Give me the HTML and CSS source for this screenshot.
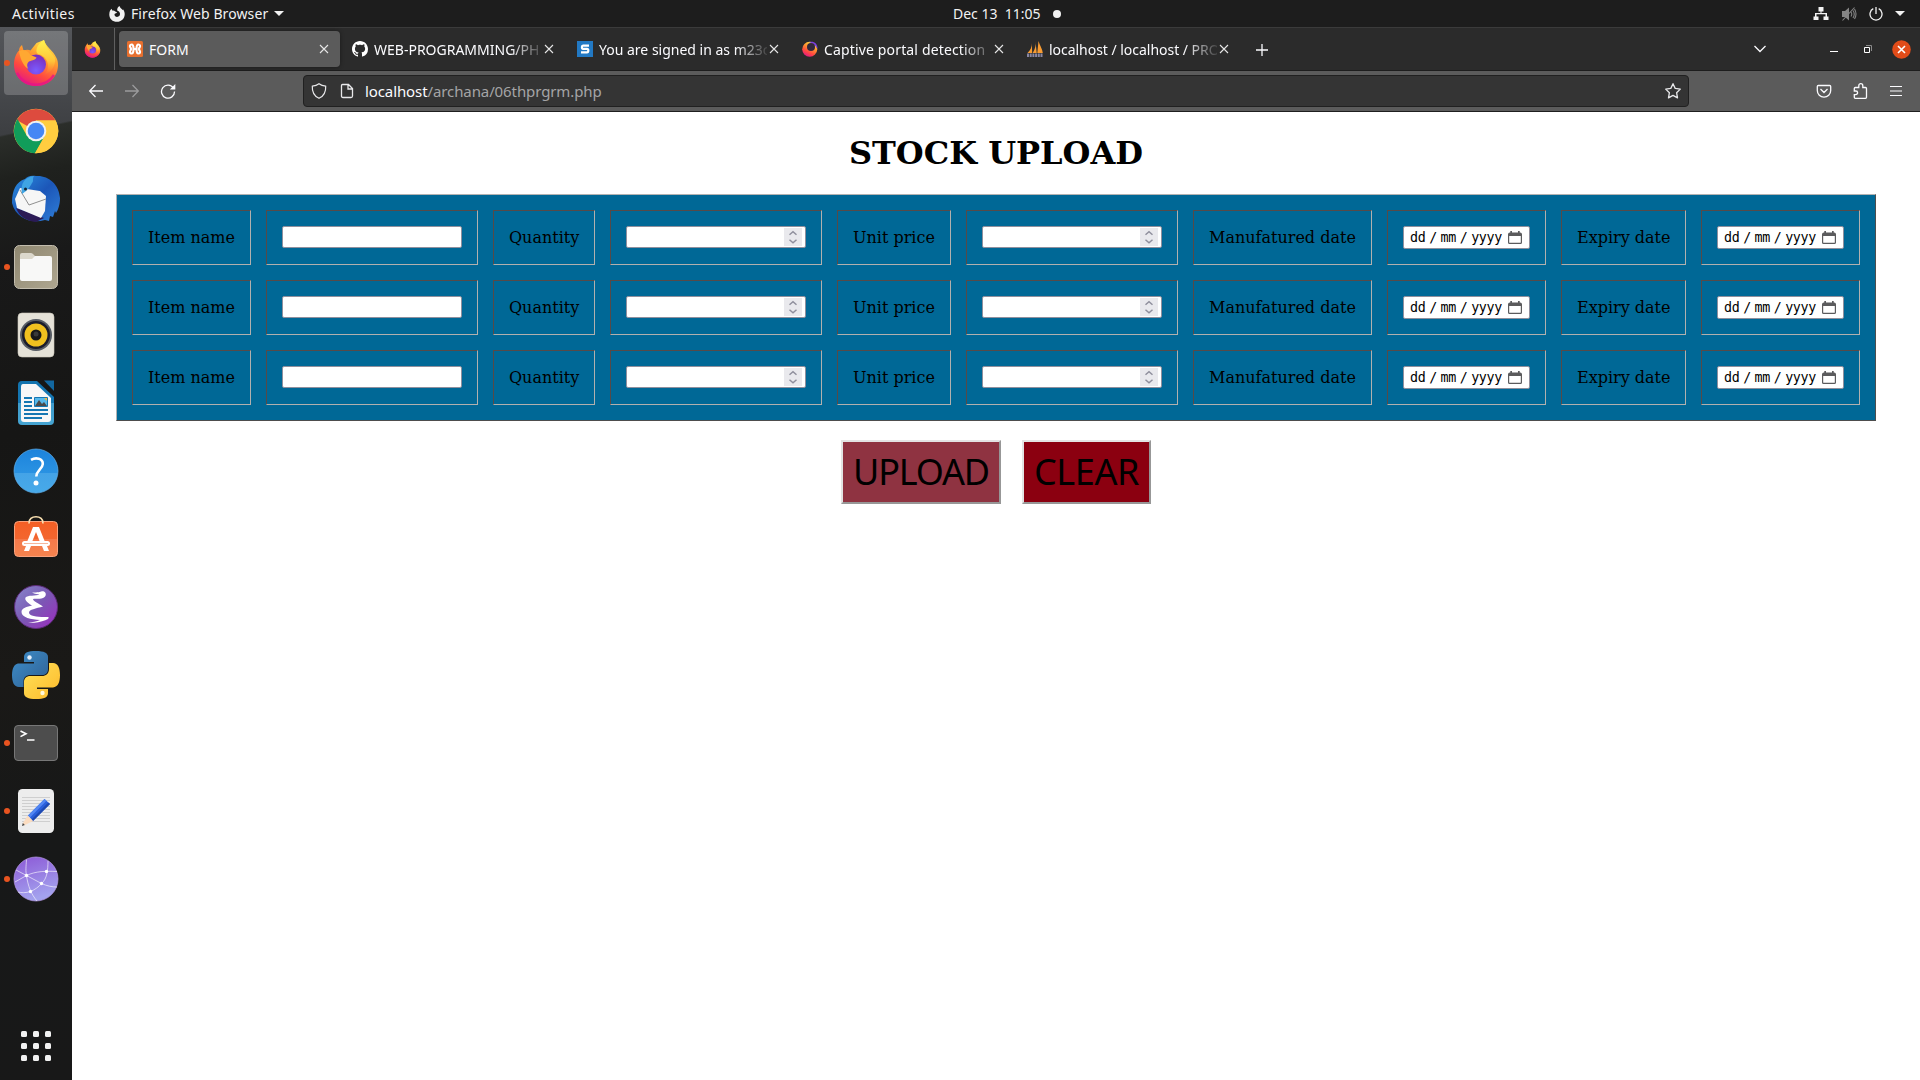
FILE: index.html
```html
<!DOCTYPE html>
<html lang="en">
<head>
<meta charset="utf-8">
<title>FORM</title>
<link rel="stylesheet" href="styles.css">
</head>
<body>
<svg class="defs" width="0" height="0">
  <defs>
    <linearGradient id="gFox" x1="0.8" y1="0" x2="0.3" y2="1"><stop offset="0" stop-color="#fff44f"/><stop offset=".35" stop-color="#ffa02e"/><stop offset=".7" stop-color="#ff4a3f"/><stop offset="1" stop-color="#e31587"/></linearGradient>
    <linearGradient id="gFlame" x1="0.6" y1="0" x2="0.6" y2="1"><stop offset="0" stop-color="#fff44f"/><stop offset=".6" stop-color="#ffc53a"/><stop offset="1" stop-color="#ff8a2a" stop-opacity="0"/></linearGradient>
    <radialGradient id="gGlobe" cx=".5" cy=".8" r=".8"><stop offset="0" stop-color="#7a5cff"/><stop offset="1" stop-color="#7a2bb8"/></radialGradient>
    <linearGradient id="gBird" x1="0" y1="0" x2="1" y2="1"><stop offset="0" stop-color="#2a8fe0"/><stop offset=".5" stop-color="#1c56b8"/><stop offset="1" stop-color="#2f7fd8"/></linearGradient>
    <linearGradient id="gFiles" x1="0" y1="0" x2="1" y2="1"><stop offset="0" stop-color="#8f8770"/><stop offset="1" stop-color="#aea690"/></linearGradient>
    <linearGradient id="gHelp" x1="0" y1="0" x2="0" y2="1"><stop offset="0" stop-color="#1c83dc"/><stop offset=".54" stop-color="#2a92e2"/><stop offset=".55" stop-color="#44a3e7"/><stop offset="1" stop-color="#47aae9"/></linearGradient>
    <linearGradient id="gBag" x1="0" y1="0" x2="0" y2="1"><stop offset="0" stop-color="#f45f25"/><stop offset=".5" stop-color="#f3662f"/><stop offset=".51" stop-color="#f4794a"/><stop offset="1" stop-color="#f5844f"/></linearGradient>
    <linearGradient id="gEmacs" x1="0" y1="0" x2="1" y2="1"><stop offset="0" stop-color="#8788cc"/><stop offset=".5" stop-color="#7b58b4"/><stop offset="1" stop-color="#9d2ac0"/></linearGradient>
    <linearGradient id="gPyB" x1="0" y1="0" x2="1" y2="1"><stop offset="0" stop-color="#3e8fcb"/><stop offset="1" stop-color="#2f5f92"/></linearGradient>
    <linearGradient id="gPyY" x1="0" y1="0" x2="1" y2="1"><stop offset="0" stop-color="#ffe25a"/><stop offset="1" stop-color="#fdb92a"/></linearGradient>
    <linearGradient id="gWeb" x1="0" y1="0" x2="0.3" y2="1"><stop offset="0" stop-color="#8c58d6"/><stop offset="1" stop-color="#a3a2ee"/></linearGradient>
    <linearGradient id="gWriter" x1="0" y1="0" x2="0" y2="1"><stop offset="0" stop-color="#1273ae"/><stop offset=".5" stop-color="#1577b3"/><stop offset=".51" stop-color="#3f9ccb"/><stop offset="1" stop-color="#45a4d2"/></linearGradient>
    <symbol id="fox" viewBox="0 0 46 48">
      <path fill="url(#gFox)" d="M23 47C10 47 1 37.500 1 25.500C1 19 3.500 14 6 11.500C6 9.500 7 7.500 9 6L10.500 11.500C13 10.500 16 10.500 17.500 11.500C20 8 22 6 23.500 4L31 1C33 8 40 11 43.500 19C45.500 23 45.500 29 43.500 34C40 42 32.500 47 23 47Z"/>
      <circle cx="23" cy="25.500" r="10" fill="url(#gGlobe)"/>
      <path fill="#ffa832" d="M6 12C10 10 15 11 17.500 16L23.500 18.500C22.500 21.500 17.500 21.500 16 22.500C14 24 13.500 27 15.500 30C10 27 7 19 6 12Z"/>
      <path fill="url(#gFlame)" d="M31 1C23 6 22 13 25 15C30 16 35 20 35 27C35 31 33 34 31 36C38 34 43 27 42 19C38 13 33 9 31 1Z"/>
      <path fill="none" stroke="#e31587" stroke-width="2.500" stroke-opacity=".8" d="M4 34C8 42 15 45.700 23 45.700C30 45.700 37 42.500 41 36"/>
    </symbol>
    <symbol id="x" viewBox="0 0 12 12"><path d="M2 2l8 8M10 2l-8 8" fill="none" stroke="currentColor" stroke-width="1.100"/></symbol>
    <symbol id="cal" viewBox="0 0 14 14"><path fill="#5b5b5d" d="M2.300 0h1.700v1.500h6V0h1.700v1.500h.5A1.800 1.800 0 0 1 14 3.200V11.500a1.500 1.500 0 0 1-1.500 1.500h-11A1.500 1.500 0 0 1 0 11.500V3.200A1.800 1.800 0 0 1 1.800 1.500h.5zM1.200 5v6.200c0 .4.200.6.600.6h10.400c.4 0 .6-.2.600-.6V5z"/></symbol>
    <symbol id="spin" viewBox="0 0 18 18"><path d="M5.500 6.800L9 3.800l3.500 3M5.500 11.800L9 14.800l3.500-3" fill="none" stroke="#8f8f9d" stroke-width="1.500"/></symbol>
  </defs>
</svg>

<header class="topbar">
  <span class="activities t">Activities</span>
  <svg class="appicon" viewBox="0 0 16 16"><path fill="#f2f2f2" d="M8 15.800C3.600 15.800.3 12.600.3 8.400C.3 5.500 1.400 3.800 2.600 2.800L3.200 4.600C4.500 4.300 5.600 4.700 6.200 5.500L8 6.200C7.600 7.400 6.300 7.300 5.800 7.800C5 8.700 5.600 10.800 8 10.900C10 10.900 11.100 9.400 11 7.800C10.900 6 9.300 5 8.200 4.600C8 2.600 9 1 10.500.1C11 2.200 12.600 2.500 13.600 4L14.200 3.400C15.300 5 15.800 6.700 15.700 8.500C15.500 12.700 12.200 15.800 8 15.800Z"/></svg>
  <span class="appname t">Firefox Web Browser</span>
  <i class="tri"></i>
  <div class="clock"><span class="t">Dec 13&nbsp; 11:05</span><i class="note"></i></div>
  <div class="status">
    <svg width="16" height="14" viewBox="0 0 16 14"><path fill="#f2f2f2" d="M5.500 0h5v4.500h-2V6H14v3.500h1.500V13h-5V9.500h2V7.200h-9v2.300h2V13h-5V9.500H2V6h5.500V4.500h-2z"/></svg>
    <svg width="16" height="14" viewBox="0 0 16 14"><path fill="#858585" d="M1 4h3l4-3.500v13L4 10H1z"/><path d="M10 5q1.500 2 0 4.500M12 3.500q2.500 3.500 0 7.500M13.500 2q3 5 0 10M1.500 13.500L13.500.5" fill="none" stroke="#858585" stroke-width="1.100"/></svg>
    <svg width="14" height="14" viewBox="0 0 14 14"><path d="M4.300 1.700a6 6 0 1 0 5.400 0M7 0v7" fill="none" stroke="#f2f2f2" stroke-width="1.300"/></svg>
    <i class="tri"></i>
  </div>
</header>

<div class="desktop">
<nav class="dock">
  <div class="slot active run"><svg viewBox="0 0 48 48"><use href="#fox" x="1" y="0" width="46" height="48"/></svg></div>
  <div class="slot"><svg viewBox="0 0 48 48"><circle cx="24" cy="24" r="22.300" fill="#ffcd40"/><path fill="#dd4b3e" d="M24 24L4.700 13A22.300 22.300 0 0 1 43.500 13.500H24Z"/><path fill="#119d5a" d="M24 24L15 29L5.500 12A22.300 22.300 0 0 0 23 46.300L32 30Z"/><path fill="#ffcd40" d="M24 24V13.500H43.500A22.300 22.300 0 0 1 23 46.300L32.500 30Z"/><circle cx="24" cy="24" r="10.300" fill="#f1f1f1"/><circle cx="24" cy="24" r="8.300" fill="#4687f4"/></svg></div>
  <div class="slot"><svg viewBox="0 0 48 48"><path fill="url(#gBird)" d="M24 1C36 0 47 9 48 23C48 30 46 35 44 38L43 36L41 42L38 41L37 46L33 45C20 49 4 44 0 28C0 15 4 7 13 4C15 2 18 0 24 1Z"/><path fill="#2b1a55" d="M4 33L32 43L24 47C14 46 7 41 4 33Z"/><path fill="#f6f6f6" d="M8 13L28 16L34 21L33 36L29 43L5 33L3 24Z"/><path fill="none" stroke="#8f8f8f" d="M8 15L17 30L34 24"/><path fill="#3fa4e4" d="M10 19C8 8 13 2 22 1C20 4 22 6 20 8C18 12 16 15 10 19Z"/><circle cx="13.500" cy="14" r="1.500" fill="#123"/></svg></div>
  <div class="slot run"><svg viewBox="0 0 48 48"><rect x="2.500" y="2.500" width="43" height="43" rx="5" fill="url(#gFiles)" stroke="#c3bdae"/><path fill="#dcd8cc" d="M8 12q0-2 2-2h9q1.500 0 2.500 1.500L24 14v5H8z"/><path fill="#f8f8f7" d="M8 16h12l3-3h15q2 0 2 2v21q0 2-2 2H10q-2 0-2-2z"/></svg></div>
  <div class="slot"><svg viewBox="0 0 48 48"><rect x="6" y="2" width="36" height="44" rx="4" fill="#e5e2d8" stroke="#cfcbbd" stroke-width=".6"/><circle cx="24" cy="24" r="16" fill="#575c64"/><circle cx="24" cy="24" r="14" fill="#1b1c2b"/><circle cx="24" cy="24" r="11.500" fill="#f0c01f"/><circle cx="24" cy="24" r="5.500" fill="#191919"/><circle cx="24" cy="23" r="2.500" fill="#3a3a3a"/></svg></div>
  <div class="slot"><svg viewBox="0 0 48 48"><path fill="url(#gWriter)" d="M10 2h15l17 16v24q0 4-4 4H10q-4 0-4-4V6q0-4 4-4z"/><path fill="#f7f7f7" d="M11 5h13l15 14v21q0 3-3 3H12q-3 0-3-3V8q0-3 2-3z"/><path fill="#1267a0" d="M32 1.500h10V12z"/><path stroke="#1577b3" stroke-width="2" d="M12 19h8M12 23h8M12 27h8M12 31h24M12 35h24M12 39h18"/><path fill="#56b8ea" stroke="#1577b3" d="M22.500 18.500h13v9h-13z"/><path fill="#4a4a4a" d="M23 27l4-6 3 4 2-2 3 4z"/><path fill="#f0b840" d="M32 19h3v3z"/></svg></div>
  <div class="slot"><svg viewBox="0 0 48 48"><circle cx="24" cy="24" r="22" fill="url(#gHelp)" stroke="#5fb0ee" stroke-width=".7"/><path fill="none" stroke="#fff" stroke-width="2.600" d="M19 12.900C24 10 31 11.500 30.800 17C30.500 22 24.500 23 24.300 29.500"/><circle cx="24" cy="36" r="2.500" fill="#fff"/></svg></div>
  <div class="slot"><svg viewBox="0 0 48 48"><g transform="translate(0 -1)"><rect x="2.500" y="7.500" width="43" height="35" rx="4" fill="url(#gBag)" stroke="#f9a27c"/><path fill="none" stroke="#f8dfb0" stroke-width="1.700" d="M17 9.500C16 .5 32 .5 31 9.500"/><path fill="#fff" d="M21 13h6l6 15h-5l-4-10-4 10h-5zM14 32h5l-2 5h-5zM30 32h5l2 5h-5z"/><rect x="10" y="27" width="28" height="5" rx="2.500" fill="#fff"/><path stroke="#f4a582" stroke-width=".8" d="M12 29.500h24"/></g></svg></div>
  <div class="slot"><svg viewBox="0 0 48 48"><circle cx="24" cy="24" r="21.500" fill="url(#gEmacs)" stroke="#5c2a78"/><path fill="#fff" d="M20 9.500C28 10 29 7.500 32 8.500C35 10 34 14 31 15C27 16.500 21 15 21 16.500C22 18.500 26 20 31 23.500C24 25.500 17 26.500 17 29.500C17 33.500 28 34.500 36 34C37.500 34.500 36.500 36 34 37C28 39.500 22 40 16 39.800C20 39 25 38.500 28 37C19 36.500 9.500 34.500 9.500 29C9.500 25 15 23.500 20 22.500C15 19.500 12.500 17 13.500 14.500C15.500 12 24 13 27.500 11.500C26 11 22.500 11 20 9.500Z"/></svg></div>
  <div class="slot"><svg viewBox="0 0 48 48"><path fill="url(#gPyB)" d="M24 0C16 0 12 1.500 12 6V11H22V12.500H6C2 13 0 18 0 24C0 31 2 36 7 36H11.500V30C11.500 26 15 24 18 24H30C33.500 24 36 22 36 18V6C36 2 32 0 24 0Z"/><path fill="url(#gPyY)" d="M24 48C32 48 36 46.500 36 42V38H25V36.500H41C46 36 48 31 48 24C48 17 46 12 41 12H37V18C37 22.500 34 25 30 25H18C15 25 12 27 12 31V42C12 46 16 48 24 48Z"/><circle cx="17.500" cy="6.500" r="2.200" fill="#e6f0fa"/><circle cx="30.500" cy="42" r="2.200" fill="#fff8dc"/></svg></div>
  <div class="slot run"><svg viewBox="0 0 48 48"><rect x="2.500" y="6.500" width="43" height="35" rx="3.500" fill="#4d4d4d" stroke="#777"/><path fill="none" stroke="#fff" stroke-width="1.600" d="M8.500 12l5.500 2.800-5.500 2.800M15 21h7.500"/></svg></div>
  <div class="slot run"><svg viewBox="0 0 48 48"><rect x="6" y="2" width="36" height="44" rx="4.500" fill="#ededed"/><path stroke="#cfcfcf" d="M10 10.500h28M10 13.500h28M10 16.500h28M10 19.500h28M10 22.500h28M10 25.500h28M10 28.500h28M10 31.500h28M10 34.500h28"/><path fill="#2a5fdb" d="M16 28.500L32.500 12L38 17L21 34Z"/><path fill="#5286f2" d="M16 28.500L32.500 12L34.500 13.800L18 30.500Z"/><path fill="#1e49b0" d="M19.500 32.500L36.300 15.500L38 17L21 34Z"/><path fill="#fbdcc0" d="M15.500 28.500L21 34L12 38.500L10.500 37Z"/><path fill="#444" d="M10.800 36L12.800 38L10 39Z"/></svg></div>
  <div class="slot run"><svg viewBox="0 0 48 48"><circle cx="24" cy="24" r="22" fill="url(#gWeb)" stroke="#b79be8" stroke-width=".7"/><path fill="none" stroke="#fff" stroke-opacity=".6" stroke-width="1" d="M3 27L14.500 20.500C24 16 34 16 45 16.500M4 15L14.500 20.500L29.500 28.500C35 31 40 32 45 32M14.500 4.500C14 12 13.500 16 14.500 20.500C16 31 19 39 25 46M36 6C36 15 35 24 29.500 28.500C27 32 22 35 18.500 36.500C14 38 9 38 6 37"/><g fill="#fff"><circle cx="14.500" cy="20.500" r="1.700"/><circle cx="34.500" cy="16.500" r="1.700"/><circle cx="29.500" cy="28.500" r="1.700"/><circle cx="18.500" cy="36.500" r="1.700"/></g></svg></div>
  <div class="apps"><i></i><i></i><i></i><i></i><i></i><i></i><i></i><i></i><i></i></div>
</nav>

<main class="browser">
  <div class="tabs">
    <div class="pinned"><svg width="17" height="17"><use href="#fox"/></svg></div>
    <div class="tab current">
      <svg width="16" height="16" viewBox="0 0 16 16"><rect width="16" height="16" rx="1.500" fill="#e8702f"/><path fill="none" stroke="#fff" stroke-width="2.200" stroke-linejoin="round" d="M6.500 8C6.500 6.500 6.500 3.500 4.600 3.500C3 3.500 2.600 5 3.300 6.300Q4 7 4 8Q4 9 3.300 9.700C2.600 11 3 12.500 4.600 12.500C6.500 12.500 6.500 9.500 6.500 8H9.500C9.500 9.500 9.500 12.500 11.400 12.500C13 12.500 13.400 11 12.700 9.700Q12 9 12 8Q12 7 12.700 6.300C13.400 5 13 3.500 11.400 3.500C9.500 3.500 9.500 6.500 9.500 8"/></svg>
      <span class="title t form">FORM</span><svg class="close" width="12" height="12"><use href="#x"/></svg></div>
    <div class="tab">
      <svg width="16" height="16" viewBox="0 0 16 16"><path fill="#fff" d="M8 0C3.580 0 0 3.580 0 8c0 3.540 2.290 6.530 5.470 7.590.4.070.55-.17.55-.38 0-.19-.01-.82-.01-1.490-2.010.37-2.530-.49-2.690-.94-.09-.23-.48-.94-.82-1.130-.28-.15-.68-.52-.01-.53.63-.01 1.080.58 1.230.82.720 1.210 1.870.87 2.330.66.070-.52.280-.87.510-1.070-1.780-.2-3.640-.89-3.640-3.950 0-.87.310-1.590.82-2.150-.08-.2-.36-1.020.08-2.120 0 0 .67-.21 2.200.82.640-.18 1.320-.27 2-.27s1.360.09 2 .27c1.530-1.040 2.200-.82 2.200-.82.440 1.100.16 1.920.08 2.120.51.56.82 1.270.82 2.150 0 3.070-1.870 3.750-3.650 3.950.29.25.54.73.54 1.480 0 1.070-.01 1.930-.01 2.200 0 .21.15.46.55.38A8.010 8.010 0 0 0 16 8c0-4.420-3.580-8-8-8z"/></svg>
      <span class="title fade t web">WEB-PROGRAMMING/PH</span><svg class="close" width="12" height="12"><use href="#x"/></svg></div>
    <div class="tab">
      <svg width="16" height="16" viewBox="0 0 16 16"><rect width="16" height="16" fill="#2279c4"/><path fill="none" stroke="#fff" stroke-width="2.200" d="M12 4.600H6Q4.900 4.600 4.900 6Q4.900 7.800 6 7.800H10Q11.300 7.800 11.300 9.500Q11.300 11.400 10 11.400H4"/></svg>
      <span class="title fade t signed">You are signed in as m23c</span><svg class="close" width="12" height="12"><use href="#x"/></svg></div>
    <div class="tab">
      <svg width="16" height="16" viewBox="0 0 16 16"><circle cx="7.700" cy="8.300" r="7.500" fill="url(#gFox)"/><path fill="#7b3fe0" d="M7 1C12-.5 16 3 15.500 8C14 5 12 3 7 1Z"/><circle cx="9" cy="6" r="4" fill="#33283c"/></svg>
      <span class="title fade t captive">Captive portal detection |</span><svg class="close" width="12" height="12"><use href="#x"/></svg></div>
    <div class="tab">
      <svg width="16" height="16" viewBox="0 0 16 16"><path fill="#f89c33" d="M4.800 2C5 6 3.500 9 .5 12H5.200ZM8.500 0C9.200 4 8.200 8 5.700 12H9.700ZM11.500 0C12.500 4 15.500 8 15.800 12H10.300Z"/><path stroke="#8886a2" stroke-width="3.500" stroke-dasharray="2 .7" d="M0 14.200h16"/></svg>
      <span class="title fade t pma">localhost / localhost / PRO</span><svg class="close" width="12" height="12"><use href="#x"/></svg></div>
    <svg class="plus" width="14" height="14" viewBox="0 0 14 14"><path d="M7 1v12M1 7h12" stroke="#fbfbfe" stroke-width="1.300"/></svg>
    <div class="winctl">
      <svg width="14" height="14" viewBox="0 0 14 14"><path d="M1.500 4l5.500 5.500L12.500 4" fill="none" stroke="#fbfbfe" stroke-width="1.300"/></svg>
      <svg class="min" width="8" height="14" viewBox="0 0 8 14"><path d="M0 9.500h8" stroke="#fff"/></svg>
      <svg class="res" width="8" height="14" viewBox="0 0 8 14"><path d="M.5 5.500h5v5h-5z" fill="none" stroke="#fff"/><path d="M2 3.500h5.500V9" fill="none" stroke="#8a8a8a"/></svg>
      <svg class="quit" width="19" height="19" viewBox="0 0 19 19"><circle cx="9.500" cy="9.500" r="9.300" fill="#e24c19"/><path d="M6 6l7 7M13 6l-7 7" stroke="#fff" stroke-width="1.600"/></svg>
    </div>
  </div>
  <div class="toolbar">
    <svg class="ic" viewBox="0 0 16 16"><path d="M7.500 2L1.700 8l5.800 6M1.700 8H15" fill="none" stroke="#fbfbfe" stroke-width="1.300"/></svg>
    <svg class="ic dim" viewBox="0 0 16 16"><path d="M8.500 2l5.800 6-5.800 6M14.300 8H1" fill="none" stroke="#fbfbfe" stroke-width="1.300"/></svg>
    <svg class="ic" viewBox="0 0 16 16"><path d="M13.500 5.200A6.500 6.500 0 1 0 14.500 8.500" fill="none" stroke="#fbfbfe" stroke-width="1.300"/><path fill="#fbfbfe" d="M15.300 1v5.500H9.800z"/></svg>
    <div class="urlbar">
      <svg width="16" height="16" viewBox="0 0 16 16"><path d="M8 .8C10 2.300 12.500 3 14.700 3.200C15 9 13 13 8 15.300C3 13 1 9 1.300 3.200C3.500 3 6 2.300 8 .8Z" fill="none" stroke="#e8e8ea" stroke-width="1.200"/></svg>
      <svg class="page" width="16" height="16" viewBox="0 0 16 16"><path d="M3.500 1.500h6l4 4v7.500q0 1.500-1.500 1.500H4q-1.500 0-1.500-1.500V2.500q0-1 1-1zM9 1.500V6h4.500" fill="none" stroke="#e8e8ea" stroke-width="1.300"/></svg>
      <span class="url t">localhost<span class="path">/archana/06thprgrm.php</span></span>
      <svg class="star" width="18" height="18" viewBox="0 0 18 18"><path d="M9 1.700l2.200 4.700 5.100.7-3.700 3.600.9 5.200L9 13.400l-4.500 2.500.9-5.200L1.700 7.100l5.100-.7z" fill="none" stroke="#e8e8ea" stroke-width="1.300" stroke-linejoin="round"/></svg>
    </div>
    <div class="tools">
      <svg class="ic" viewBox="0 0 16 16"><path d="M2.300 2.500h11.400q1 0 1 1V7.500a6.700 6.700 0 0 1-13.400 0V3.500q0-1 1-1zM4.500 6l3.500 3.500L11.500 6" fill="none" stroke="#fbfbfe" stroke-width="1.300"/></svg>
      <svg class="ic" viewBox="0 0 16 16"><path d="M3.200 15.300q-.9 0-.9-1v-2.700h1.500a1.700 1.700 0 0 0 0-3.600H2.300V5.500q0-1 1-1h3.500V2.700a2 2 0 0 1 4 0v1.800h2.700q1 0 1 1v8.800q0 1-1 1z" fill="none" stroke="#fbfbfe" stroke-width="1.300"/></svg>
      <svg class="ic" viewBox="0 0 16 16"><path d="M2 3.500h12M2 8h12M2 12.500h12" stroke="#fbfbfe" stroke-width="1.200"/></svg>
    </div>
  </div>

  <section class="page-body">
    <h1>STOCK UPLOAD</h1>
    <table class="stock">
      <colgroup><col class="c-item"><col class="c-in"><col class="c-qty"><col class="c-in"><col class="c-price"><col class="c-in"><col class="c-mfd"><col class="c-date"><col class="c-exp"><col class="c-date"></colgroup>
      <tr><td>Item name</td><td><div class="field"></div></td><td>Quantity</td><td><div class="field num"><svg class="spin"><use href="#spin"/></svg></div></td><td>Unit price</td><td><div class="field num"><svg class="spin"><use href="#spin"/></svg></div></td><td>Manufatured date</td><td><div class="field date"><span>dd</span><span>/</span><span>mm</span><span>/</span><span>yyyy</span><svg><use href="#cal"/></svg></div></td><td>Expiry date</td><td><div class="field date"><span>dd</span><span>/</span><span>mm</span><span>/</span><span>yyyy</span><svg><use href="#cal"/></svg></div></td></tr>
      <tr><td>Item name</td><td><div class="field"></div></td><td>Quantity</td><td><div class="field num"><svg class="spin"><use href="#spin"/></svg></div></td><td>Unit price</td><td><div class="field num"><svg class="spin"><use href="#spin"/></svg></div></td><td>Manufatured date</td><td><div class="field date"><span>dd</span><span>/</span><span>mm</span><span>/</span><span>yyyy</span><svg><use href="#cal"/></svg></div></td><td>Expiry date</td><td><div class="field date"><span>dd</span><span>/</span><span>mm</span><span>/</span><span>yyyy</span><svg><use href="#cal"/></svg></div></td></tr>
      <tr><td>Item name</td><td><div class="field"></div></td><td>Quantity</td><td><div class="field num"><svg class="spin"><use href="#spin"/></svg></div></td><td>Unit price</td><td><div class="field num"><svg class="spin"><use href="#spin"/></svg></div></td><td>Manufatured date</td><td><div class="field date"><span>dd</span><span>/</span><span>mm</span><span>/</span><span>yyyy</span><svg><use href="#cal"/></svg></div></td><td>Expiry date</td><td><div class="field date"><span>dd</span><span>/</span><span>mm</span><span>/</span><span>yyyy</span><svg><use href="#cal"/></svg></div></td></tr>
    </table>
    <div class="actions"><button class="btn upload">UPLOAD</button><button class="btn clear">CLEAR</button></div>
  </section>
</main>
</div>
</body>
</html>
```
FILE: styles.css
```css
* { box-sizing: border-box; }
body { margin: 0; width: 1920px; height: 1080px; overflow: hidden; background: #fff; font-family: "Noto Sans", "Open Sans", sans-serif; }
svg { display: block; flex: none; }
.defs { position: absolute; }
.t { font-size: 14px; line-height: 20px; white-space: pre; color: #f2f2f2; }

.topbar { display: grid; grid-template-columns: 97px 16px 149px 10px 1fr auto; align-items: center; height: 27px; padding: 0 15px 0 12px; background: #1d1d1d; }
.activities { letter-spacing: .45px; }
.appicon { width: 16px; height: 16px; }
.appname { padding-left: 6px; letter-spacing: .1px; }
.tri { width: 0; height: 0; border: 5px solid transparent; border-top-color: #f2f2f2; border-bottom: 0; }
.clock { display: flex; align-items: center; gap: 12px; padding-left: 669px; }
.note { width: 8px; height: 8px; border-radius: 50%; background: #f2f2f2; }
.status { display: flex; align-items: center; gap: 12px; }

.desktop { display: flex; height: 1053px; }
.dock { display: flex; flex-direction: column; align-items: stretch; width: 72px; padding-top: 2px; background: linear-gradient(168deg, transparent 0 106px, #2b2e2a 108px, #1f211e 150px, #191919 230px, #161615 400px, #1a1917 640px, #171818 800px, #181818 100%), linear-gradient(#54565a, #3c3e41 110px); }
.slot { position: relative; display: flex; align-items: center; justify-content: center; height: 68px; }
.slot svg { width: 48px; height: 48px; }
.slot.active::before { content: ""; position: absolute; inset: 2px 4px; border-radius: 4px; background: rgba(255,255,255,.2); }
.slot.active svg { position: relative; }
.slot.run::after { content: ""; position: absolute; left: 4px; top: 31px; width: 6px; height: 6px; border-radius: 50%; background: #e95420; }
.apps { display: grid; grid-template-columns: repeat(3, 6px); gap: 6px; justify-content: center; margin-top: auto; padding-bottom: 19px; }
.apps i { height: 6px; border-radius: 1.5px; background: #f2f2f2; }

.browser { flex: 1; display: flex; flex-direction: column; }
.tabs { display: flex; align-items: stretch; height: 44px; background: #2b2b2b; border-top: 1px solid #3b3b3b; border-bottom: 1px solid #1d1d1d; }
.pinned { display: flex; align-items: center; width: 43px; margin-right: 2px; padding-left: 12px; border-right: 1px solid #606060; }
.tab { display: flex; align-items: center; width: 221px; height: 36px; margin: 3px 2px; padding: 0 10px 0 8px; border-radius: 4px; }
.tab.current { background: #5b5b5b; box-shadow: 0 0 4px rgba(0,0,0,.4); }
.tab > svg:first-child { margin-right: 6px; }
.title { width: 168px; padding-top: 1px; line-height: 22px; color: #fbfbfe; }
.fade { -webkit-mask-image: linear-gradient(90deg, #000 136px, transparent 172px); mask-image: linear-gradient(90deg, #000 136px, transparent 172px); }
.captive { letter-spacing: .15px; }
.pma { letter-spacing: -.03px; }
.close { color: #e6e6e6; margin-left: 1px; }
.plus { margin: 15px 0 0 13px; }
.winctl { display: flex; align-items: center; margin-left: auto; padding-right: 9px; }
.min { margin-left: 63px; }
.res { margin-left: 26px; }
.quit { margin-left: 20px; }

.toolbar { display: flex; align-items: center; height: 41px; padding: 0 6px; background: #5b5b5b; border-bottom: 1px solid #1e1e1e; }
.ic { width: 36px; height: 16px; }
.dim { opacity: .4; }
.urlbar { display: flex; align-items: center; width: 1386px; height: 32px; margin-left: 117px; padding: 0 6px 0 7px; background: #343434; border: 1px solid #202020; border-radius: 4px; }
.page { margin-left: 12px; }
.url { flex: 1; padding-left: 10px; font-size: 15px; letter-spacing: -.1px; color: #fbfbfe; }
.path { color: #a4a4a6; }
.tools { display: flex; margin-left: auto; }

.page-body { flex: 1; display: flex; flex-direction: column; align-items: center; background: #fff; font-family: "DejaVu Serif", serif; }
h1 { margin: 23px 0 22px; font-size: 32px; line-height: 37px; }
.stock { table-layout: fixed; width: 1760px; height: 227px; border: 1px solid; border-color: #b2b2b2 #4d4d4d #4d4d4d #b2b2b2; border-spacing: 15px; background: #006896; font-size: 16px; }
.stock td { height: 55px; padding: 15px; border: 1px solid; border-color: #574a48 #b2b0ae #b2b0ae #574a48; line-height: 19px; white-space: nowrap; vertical-align: middle; color: #000; }
.c-item { width: 119px; }
.c-in { width: 212px; }
.c-qty { width: 102px; }
.c-price { width: 114px; }
.c-mfd { width: 179px; }
.c-date { width: 159px; }
.c-exp { width: 125px; }
.field { display: flex; align-items: center; width: 180px; height: 22px; margin-bottom: 1px; border: 1px solid #8f8f9d; border-radius: 2px; background: #fff; }
.num { justify-content: flex-end; padding-right: 3px; }
.spin { width: 18px; height: 18px; background: #e9e9ed; }
.date { width: 127px; height: 23px; margin: 0; padding: 0 7px 0 6px; font: 13.333px/21px "DejaVu Sans Mono", monospace; gap: 3.7px; letter-spacing: -.3px; }
.date svg { width: 14px; height: 14px; margin: 1px 0 0 auto; }
.actions { display: flex; gap: 21px; margin-top: 19px; }
.btn { height: 64px; padding: 0; border: 2px solid; border-color: #e3e3e3 #979797 #979797 #e3e3e3; font: 36px/58px "Noto Sans", sans-serif; color: #000; }
.upload { width: 160px; background: #8f3341; letter-spacing: -1.15px; }
.clear { width: 129px; background: #8b0010; letter-spacing: -.4px; }
```
